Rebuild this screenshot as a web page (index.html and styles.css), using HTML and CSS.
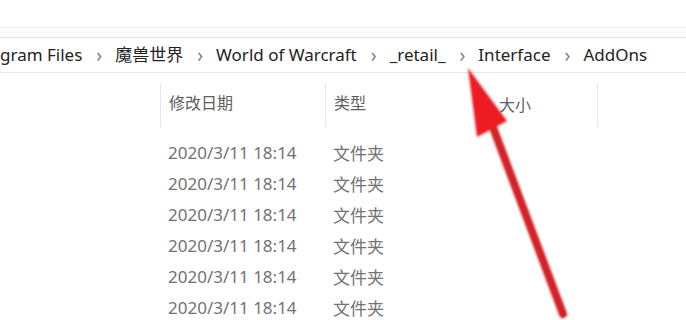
FILE: index.html
```html
<!DOCTYPE html>
<html lang="zh-CN">
<head>
<meta charset="utf-8">
<link rel="stylesheet" href="styles.css">
</head>
<body>
<div class="window">
  <div class="toolbar"></div>
  <div class="spacer"></div>
  <nav class="crumbs">
    <span class="crumb first">gram Files</span>
    <span class="sep">›</span>
    <span class="crumb">魔兽世界</span>
    <span class="sep">›</span>
    <span class="crumb">World of Warcraft</span>
    <span class="sep">›</span>
    <span class="crumb">_retail_</span>
    <span class="sep">›</span>
    <span class="crumb">Interface</span>
    <span class="sep">›</span>
    <span class="crumb">AddOns</span>
  </nav>
  <div class="list">
    <div class="head">
      <div class="col date">修改日期</div>
      <div class="col type">类型</div>
      <div class="col size">大小</div>
      <div class="col rest"></div>
    </div>
    <div class="rows">
      <div class="row"><div class="cell date">2020/3/11 18:14</div><div class="cell type">文件夹</div></div>
      <div class="row"><div class="cell date">2020/3/11 18:14</div><div class="cell type">文件夹</div></div>
      <div class="row"><div class="cell date">2020/3/11 18:14</div><div class="cell type">文件夹</div></div>
      <div class="row"><div class="cell date">2020/3/11 18:14</div><div class="cell type">文件夹</div></div>
      <div class="row"><div class="cell date">2020/3/11 18:14</div><div class="cell type">文件夹</div></div>
      <div class="row"><div class="cell date">2020/3/11 18:14</div><div class="cell type">文件夹</div></div>
    </div>
  </div>
  <svg class="arrow" width="686" height="320" viewBox="0 0 686 320">
    <defs>
      <filter id="soft" x="-20%" y="-20%" width="140%" height="140%">
        <feGaussianBlur stdDeviation="0.8"/>
      </filter>
    </defs>
    <g filter="url(#soft)">
      <line x1="491" y1="122" x2="563" y2="314" stroke="#d42127" stroke-width="8" stroke-linecap="round"/>
      <polygon points="468,68 477,137 507,121" fill="#ee1c22"/>
    </g>
  </svg>
</div>
</body>
</html>
```

FILE: styles.css
```css
html, body {
  margin: 0;
  padding: 0;
  background: #ffffff;
}

.window {
  position: relative;
  width: 686px;
  height: 320px;
  overflow: hidden;
  background: #ffffff;
  font-family: "Noto Sans", "Noto Sans CJK SC", sans-serif;
}

.toolbar {
  height: 27px;
  border-bottom: 1px solid #f1f1f1;
}

.spacer {
  height: 9px;
  background: #fbfbfb;
}

.crumbs {
  display: flex;
  align-items: center;
  height: 34px;
  border-top: 1px solid #e4e4e4;
  border-bottom: 1px solid #e4e4e4;
  font-size: 17px;
  color: #222222;
  white-space: nowrap;
}

.crumb {
  line-height: 34px;
}

.sep {
  color: #7e7e7e;
  font-size: 19px;
  line-height: 34px;
  margin: 0 13px 0 14px;
}

.list {
  display: flex;
  flex-direction: column;
  padding-top: 11px;
}

.head {
  display: grid;
  grid-template-columns: 160px 165px 165px 107px 1fr;
  height: 43px;
  font-size: 16px;
  color: #5e5e5e;
}

.head .col {
  height: 43px;
  line-height: 38px;
  padding-left: 8px;
  border-left: 1px solid #e6e6e6;
  box-sizing: border-box;
}

.head .col.date { grid-column: 2; }
.head .col.type { grid-column: 3; }
.head .col.size {
  grid-column: 4;
  border-left-color: transparent;
  line-height: 43px;
}
.head .col.rest { grid-column: 5; }

.rows {
  display: flex;
  flex-direction: column;
  margin-top: 10px;
}

.row {
  display: grid;
  grid-template-columns: 160px 165px 1fr;
  height: 31px;
  align-items: center;
  font-size: 17px;
  color: #727272;
}

.row .cell {
  padding-left: 8px;
}

.row .cell.date { grid-column: 2; }
.row .cell.type { grid-column: 3; }

.arrow {
  position: absolute;
  left: 0;
  top: 0;
  pointer-events: none;
}
```
